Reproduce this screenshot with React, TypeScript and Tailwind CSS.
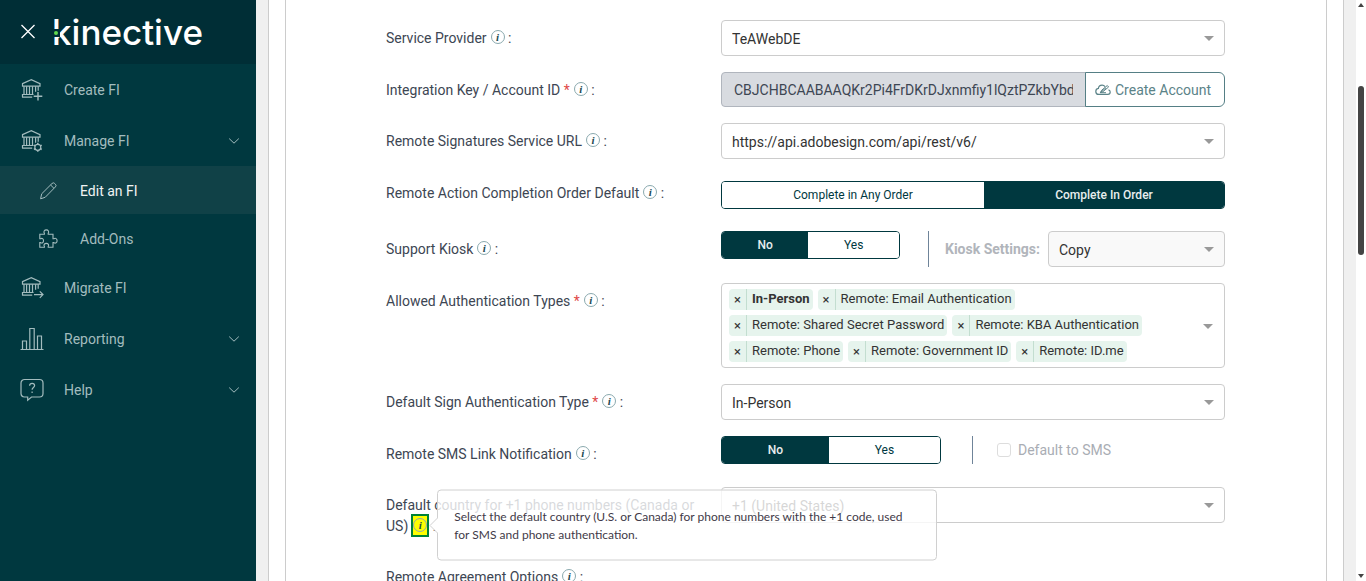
import { useState, type ReactNode } from "react";
import clsx from "clsx";

const authTypes = [
  { id: "in-person", label: "In-Person", locked: true },
  { id: "email", label: "Remote: Email Authentication" },
  { id: "secret", label: "Remote: Shared Secret Password" },
  { id: "kba", label: "Remote: KBA Authentication" },
  { id: "phone", label: "Remote: Phone" },
  { id: "gov", label: "Remote: Government ID" },
  { id: "idme", label: "Remote: ID.me" },
];

function Svg({ size, children }: { size: number; children: ReactNode }) {
  return (
    <svg
      width={size}
      height={size}
      viewBox={`0 0 ${size} ${size}`}
      fill="none"
      stroke="currentColor"
      strokeWidth="1.2"
      aria-hidden="true"
      className="shrink-0"
    >
      {children}
    </svg>
  );
}

function BankIcon({ badge }: { badge: "plus" | "gear" | "arrow" }) {
  return (
    <Svg size={24}>
      <path d="M2.5 5.6 11.3 1.6 20 5.6v2.6H2.5z" />
      <path d="M4 8.2v8M6.6 8.2v8M9.5 8.2v8M12.5 8.2v8M15.6 8.2v5.6M18.2 8.2v4.6" />
      <path d="M2.5 19.2v-2.7h11M2 19.2h10.2" />
      {badge === "plus" && <path d="M18 14v8.6M13.7 18.3h8.6" strokeWidth="1.4" />}
      {badge === "gear" && (
        <>
          <circle cx="17.8" cy="18.3" r="3" />
          <path
            d="M17.8 13.8v1.6M17.8 21.2v1.6M13.9 16.1l1.4.8M20.3 19.7l1.4.8M13.9 20.5l1.4-.8M20.3 16.9l1.4-.8"
            strokeWidth="1.5"
          />
        </>
      )}
      {badge === "arrow" && <path d="M14 18.6h9M19.8 15.4l3.2 3.2-3.2 3.2" />}
    </Svg>
  );
}

function PencilIcon() {
  return (
    <Svg size={20}>
      <path d="m2.6 17.8 1.1-5L14 2.5a1.9 1.9 0 0 1 2.7 0l.7.7a1.9 1.9 0 0 1 0 2.7L7.2 16.3zM12.6 4l3.4 3.4" strokeWidth="1" />
    </Svg>
  );
}

function PuzzleIcon() {
  return (
    <Svg size={20}>
      <path
        d="M1.8 5.2h4.6v-.9c-1.2-1.6 0-3.4 1.9-3.4s3.1 1.8 1.9 3.4v.9h4.8v4.6h.9c1.6-1.2 3.2 0 3.2 1.9s-1.6 3.1-3.2 1.9H15v4.6h-4.8v-.8c1.1-1.5 0-3-1.9-3s-3 1.5-1.9 3v.8H1.8v-4.6h.8c1.5 1.1 2.9 0 2.9-1.9s-1.4-3-2.9-1.9h-.8z"
        strokeWidth="1.1"
      />
    </Svg>
  );
}

function ChartIcon() {
  return (
    <Svg size={24}>
      <path d="M.5 22.5h23M2.5 22.5V14h4v8.5M9.8 22.5v-21h4.4v21M17.5 22.5V9h4v13.5" />
    </Svg>
  );
}

function HelpIcon() {
  return (
    <Svg size={24}>
      <path d="M4.5 1.5h15A3.5 3.5 0 0 1 23 5v10.5a3.5 3.5 0 0 1-3.5 3.5h-8l-3.8 3.2V19H4.5A3.5 3.5 0 0 1 1 15.5V5a3.500 3.500 0 0 1 3.500-3.500z" />
      <path d="M9.6 7.8c0-1.500 1-2.500 2.500-2.500s2.500 1 2.500 2.300c0 1.900-2.500 2-2.500 4.100M12.100 13.500v1.500" />
    </Svg>
  );
}

function ChevronIcon() {
  return (
    <Svg size={12}>
      <path d="m1.2 3.6 4.8 4.6 4.8-4.6" strokeWidth="1" />
    </Svg>
  );
}

function CloudPenIcon() {
  return (
    <svg width="16" height="12" viewBox="0 0 16 12" fill="none" stroke="currentColor" aria-hidden="true">
      <path
        d="M10 2.6C9.3 1.6 8.3 1.1 7.1 1.1c-2 0-3.5 1.4-3.7 3.3C1.900 4.600.8 5.800.8 7.400c0 1.700 1.300 3 3 3h9.100c1.300 0 2.300-1 2.300-2.300 0-1.100-.7-2-1.700-2.200"
        strokeWidth="1.2"
      />
      <path d="m5.4 8.5 1.300-2.300L12.300 1.500l1.300 1.500-5.700 4.700z" />
      <path d="m5.4 8.5 5.600-4.700M5 8.700h6" />
    </svg>
  );
}

function Logo() {
  return (
    <div className="relative font-['Inter',sans-serif] text-[35px] leading-[40px] font-medium text-white">
      kinective
      <span className="absolute top-[17px] left-0 flex h-2 w-2 items-center justify-center bg-[#002e36]">
        <span className="h-1 w-1 rounded-full bg-[#5fd94f]" />
      </span>
    </div>
  );
}

interface NavItemProps {
  label: string;
  icon: ReactNode;
  sub?: boolean;
  active?: boolean;
  expandable?: boolean;
}

function NavItem({ label, icon, sub, active, expandable }: NavItemProps) {
  return (
    <a
      href="#"
      className={clsx(
        "flex items-center text-sm",
        sub ? "h-12 gap-[22px] pt-0.5 pl-[38px]" : "h-[51px] gap-5 pl-5",
        active ? "bg-[#104147]" : ""
      )}
    >
      {icon}
      <span className={clsx("flex-1", active && "text-[#f0f4f4]")}>{label}</span>
      {expandable && (
        <span className="mr-4">
          <ChevronIcon />
        </span>
      )}
    </a>
  );
}

function Sidebar() {
  return (
    <aside className="w-64 shrink-0 bg-[#00383f] text-[#a3bcbe]">
      <div className="flex h-16 items-center gap-4 bg-[#002e36] pl-5">
        <button type="button" aria-label="Close menu" className="text-white">
          <svg width="16" height="16" viewBox="0 0 16 16" stroke="currentColor" strokeWidth="1.3" aria-hidden="true">
            <path d="m1.5 1 13 13M14.5 1l-13 13" />
          </svg>
        </button>
        <Logo />
      </div>
      <nav>
        <NavItem label="Create FI" icon={<BankIcon badge="plus" />} />
        <NavItem label="Manage FI" icon={<BankIcon badge="gear" />} expandable />
        <NavItem label="Edit an FI" icon={<PencilIcon />} sub active />
        <NavItem label="Add-Ons" icon={<PuzzleIcon />} sub />
        <NavItem label="Migrate FI" icon={<BankIcon badge="arrow" />} />
        <NavItem label="Reporting" icon={<ChartIcon />} expandable />
        <NavItem label="Help" icon={<HelpIcon />} expandable />
      </nav>
    </aside>
  );
}

function InfoIcon() {
  return (
    <span className="inline-flex h-3.5 w-3.5 items-center justify-center rounded-full border border-[#8aa9ae] font-['Liberation_Serif',serif] text-[11px] leading-none font-bold text-[#1d4a52] italic">
      i
    </span>
  );
}

function Tooltip({ text }: { text: string }) {
  return (
    <div
      role="tooltip"
      className="absolute top-1/2 left-full z-10 ml-2.5 w-[500px] -translate-y-1/2 rounded border border-[#d0d0d0] bg-white/80 px-4 pt-[17px] pb-4 font-['Lato',sans-serif] text-xs leading-[18px] text-[#3f3a48]"
    >
      <svg width="9" height="16" viewBox="0 0 9 16" className="absolute top-1/2 -left-[9px] -translate-y-1/2" aria-hidden="true">
        <path d="M9 0 1 8l8 8z" fill="white" />
        <path d="M9 0 1 8l8 8" fill="none" stroke="#d0d0d0" />
      </svg>
      {text}
    </div>
  );
}

interface FieldProps {
  label: string;
  htmlFor?: string;
  labelId?: string;
  required?: boolean;
  tooltip?: string;
  children?: ReactNode;
}

function Field({ label, htmlFor, labelId, required, tooltip, children }: FieldProps) {
  return (
    <div className="grid grid-cols-[335px_minmax(0,1fr)]">
      <div className="pt-2 pr-4 pb-1.5 leading-[21px] text-[#3d4653]">
        <label htmlFor={htmlFor} id={labelId}>
          {label}
          {required && <span className="text-[#e04848]"> *</span>}
        </label>
        {tooltip ? (
          <span className="relative -mt-1.5 -mb-0.5 ml-[3px] inline-flex h-[23px] w-[18px] items-center justify-center border-2 border-green-700 bg-[#ffff00] align-middle">
            <InfoIcon />
            <Tooltip text={tooltip} />
          </span>
        ) : (
          <span className="ml-1 inline-flex pb-1 align-middle">
            <InfoIcon />
          </span>
        )}
        <span> :</span>
      </div>
      <div>{children}</div>
    </div>
  );
}

function Caret() {
  return (
    <span className="pointer-events-none absolute top-1/2 right-[11px] -mt-0.5 border-x-[5px] border-t-[5px] border-x-transparent border-t-[#999]" />
  );
}

function Select({ id, value, muted }: { id: string; value: string; muted?: boolean }) {
  return (
    <div className="relative w-full">
      <select
        id={id}
        defaultValue={value}
        className={clsx(
          "block h-9 w-full appearance-none rounded border border-[#ccc] pt-0.5 pr-8 pl-2.5 text-[#333] outline-none",
          muted ? "bg-[#f9f9f9]" : "bg-white"
        )}
      >
        <option>{value}</option>
      </select>
      <Caret />
    </div>
  );
}

interface ToggleProps {
  labelledBy: string;
  options: string[];
  initial: string;
  className?: string;
}

function Toggle({ labelledBy, options, initial, className }: ToggleProps) {
  const [selected, setSelected] = useState(initial);

  return (
    <div
      role="group"
      aria-labelledby={labelledBy}
      className={clsx("flex h-7 overflow-hidden rounded border border-[#00383f] text-xs", className)}
    >
      {options.map((option) => (
        <button
          key={option}
          type="button"
          aria-pressed={option === selected}
          onClick={() => setSelected(option)}
          className={clsx(
            "flex-auto",
            option === selected ? "bg-[#00383f] font-medium text-[#e8eeee]" : "bg-white text-[#00383f]"
          )}
        >
          {option}
        </button>
      ))}
    </div>
  );
}

function AuthTypes() {
  const [items, setItems] = useState(authTypes);

  return (
    <div
      role="group"
      aria-labelledby="auth-types"
      className="relative flex flex-wrap gap-[5px] rounded border border-[#ccc] py-[5px] pr-8 pl-[7px] text-[13px] text-[#333]"
    >
      {items.map((item) => (
        <span key={item.id} className="flex h-[21px] items-stretch rounded-sm bg-[#e6f4ed]">
          <button
            type="button"
            aria-label={`Remove ${item.label}`}
            onClick={() => setItems(items.filter((i) => i.id !== item.id))}
            className="w-[18px] border-r border-[#c3ded0] leading-[18px]"
          >
            ×
          </button>
          <span className={clsx("pr-[3px] pl-[5px] leading-5", item.locked && "font-bold")}>{item.label}</span>
        </span>
      ))}
      <Caret />
    </div>
  );
}

function Scrollbar() {
  return (
    <div className="flex w-2.5 shrink-0 flex-col items-center justify-between bg-white py-[3px]" aria-hidden="true">
      <span className="border-x-[3px] border-b-4 border-x-transparent border-b-[#444]" />
      <div className="flex w-1.5 flex-1 flex-col pt-[79px]">
        <span className="h-[169px] rounded-full bg-[#444]" />
      </div>
      <span className="border-x-[3px] border-t-4 border-x-transparent border-t-[#444]" />
    </div>
  );
}

export default function App() {
  return (
    <div className="flex h-screen overflow-hidden bg-white font-['Roboto',sans-serif] text-sm">
      <Sidebar />
      <main className="min-w-0 flex-1 bg-[#f0f0f0] px-3">
        <div className="h-full border-x border-[#ccc] bg-white px-4">
          <form className="flex h-full flex-col gap-4 border-x border-[#ccc] pt-5 pr-[101px] pl-[100px]">
            <Field label="Service Provider" htmlFor="provider">
              <Select id="provider" value="TeAWebDE" />
            </Field>

            <Field label="Integration Key / Account ID" htmlFor="key" required>
              <div className="flex h-[35px]">
                <input
                  id="key"
                  readOnly
                  defaultValue="CBJCHBCAABAAQKr2Pi4FrDKrDJxnmfiy1lQztPZkbYbdUSaA"
                  className="min-w-0 flex-1 rounded-l border border-[#b0b5bd] bg-[#d8dbe0] px-3 text-[#3d4653] outline-none"
                />
                <button
                  type="button"
                  className="-ml-px flex w-[140px] items-center gap-1 rounded-r-md border border-[#557f85] bg-white pl-[9px] text-[#5b8388]"
                >
                  <CloudPenIcon />
                  Create Account
                </button>
              </div>
            </Field>

            <Field label="Remote Signatures Service URL" htmlFor="url">
              <Select id="url" value="https://api.adobesign.com/api/rest/v6/" />
            </Field>

            <Field label="Remote Action Completion Order Default" labelId="order">
              <Toggle
                labelledBy="order"
                options={["Complete in Any Order", "Complete In Order"]}
                initial="Complete In Order"
                className="my-1.5"
              />
            </Field>

            <Field label="Support Kiosk" labelId="kiosk">
              <div className="flex">
                <Toggle labelledBy="kiosk" options={["No", "Yes"]} initial="No" className="w-[179px]" />
                <div className="ml-7 flex flex-1 gap-2 border-l border-[#6f8499] pl-4">
                  <label htmlFor="kiosk-settings" className="leading-9 font-bold whitespace-nowrap text-[#b1b5bb]">
                    Kiosk Settings:
                  </label>
                  <Select id="kiosk-settings" value="Copy" muted />
                </div>
              </div>
            </Field>

            <Field label="Allowed Authentication Types" labelId="auth-types" required>
              <AuthTypes />
            </Field>

            <Field label="Default Sign Authentication Type" htmlFor="default-auth" required>
              <Select id="default-auth" value="In-Person" />
            </Field>

            <Field label="Remote SMS Link Notification" labelId="sms">
              <div className="flex">
                <Toggle labelledBy="sms" options={["No", "Yes"]} initial="No" className="w-[220px]" />
                <label className="ml-[31px] flex items-center gap-[7px] border-l border-[#6f8499] pl-6 text-[#a9adb4]">
                  <input
                    type="checkbox"
                    disabled
                    className="h-3.5 w-3.5 appearance-none rounded-[3px] border border-[#ddd] bg-white"
                  />
                  Default to SMS
                </label>
              </div>
            </Field>

            <Field
              label="Default country for +1 phone numbers (Canada or US)"
              htmlFor="country"
              tooltip="Select the default country (U.S. or Canada) for phone numbers with the +1 code, used for SMS and phone authentication."
            >
              <Select id="country" value="+1 (United States)" />
            </Field>

            <Field label="Remote Agreement Options" />
          </form>
        </div>
      </main>
      <Scrollbar />
    </div>
  );
}
